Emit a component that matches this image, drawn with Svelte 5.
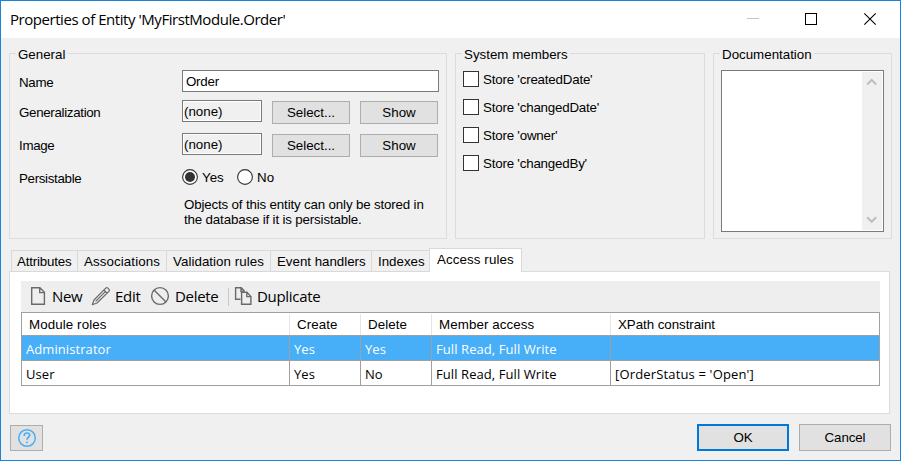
<script>
  const members = ["Store 'createdDate'", "Store 'changedDate'", "Store 'owner'", "Store 'changedBy'"];
  const tabs = [
    { label: 'Attributes', cls: 't1' },
    { label: 'Associations', cls: 't2' },
    { label: 'Validation rules', cls: 't3' },
    { label: 'Event handlers', cls: 't4' },
    { label: 'Indexes', cls: 't5' },
    { label: 'Access rules', cls: 'active' }
  ];
  const columns = ['Module roles', 'Create', 'Delete', 'Member access', 'XPath constraint'];
  const rows = [
    ['Administrator', 'Yes', 'Yes', 'Full Read, Full Write', ''],
    ['User', 'Yes', 'No', 'Full Read, Full Write', "[OrderStatus = 'Open']"]
  ];
  let persistable = $state('Yes');
  let selected = $state(0);
</script>

<div class="window">
  <header>
    <h1>Properties of Entity 'MyFirstModule.Order'</h1>
    <svg class="controls" width="130" height="14" viewBox="0 0 130 14">
      <path d="M0 6.5h12" stroke="#c4c4c4" />
      <rect x="58.5" y="1.5" width="11" height="11" fill="none" stroke="#000" />
      <path d="M117.3 1.3l11.4 11.4M128.7 1.3l-11.4 11.4" stroke="#000" stroke-width="1.1" />
    </svg>
  </header>

  <div class="groups">
    <fieldset class="general">
      <legend>General</legend>
      <div class="row first">
        <span class="label">Name</span>
        <div class="input wide">Order</div>
      </div>
      <div class="row">
        <span class="label">Generalization</span>
        <div class="input readonly">(none)</div>
        <button class="small">Select...</button>
        <button class="small">Show</button>
      </div>
      <div class="row">
        <span class="label">Image</span>
        <div class="input readonly">(none)</div>
        <button class="small">Select...</button>
        <button class="small">Show</button>
      </div>
      <div class="row last">
        <span class="label">Persistable</span>
        {#each ['Yes', 'No'] as option}
          <label class="radio {option}">
            <svg width="16" height="16" viewBox="0 0 16 16">
              <circle cx="8" cy="8" r="7.4" fill="#fff" stroke="#333" stroke-width="1.1" />
              {#if persistable === option}<circle cx="8" cy="8" r="5" fill="#333" />{/if}
            </svg>
            <span>{option}</span>
          </label>
        {/each}
      </div>
      <p>Objects of this entity can only be stored in<br />the database if it is persistable.</p>
    </fieldset>

    <fieldset class="system">
      <legend>System members</legend>
      <div class="checks">
        {#each members as member}
          <label><i></i><span>{member}</span></label>
        {/each}
      </div>
    </fieldset>

    <fieldset class="docs">
      <legend>Documentation</legend>
      <div class="textarea">
        <div class="scroll">
          <svg width="20" height="20" viewBox="0 0 20 20"><path d="M5.2 12.6L9.7 8.1l4.5 4.5" fill="none" stroke="#bfbfbf" stroke-width="2.1" /></svg>
          <svg width="20" height="20" viewBox="0 0 20 20"><path d="M5.2 7.2l4.5 4.5 4.5-4.5" fill="none" stroke="#bfbfbf" stroke-width="2.1" /></svg>
        </div>
      </div>
    </fieldset>
  </div>

  <nav>
    {#each tabs as tab}
      <div class="tab {tab.cls}"><span>{tab.label}</span></div>
    {/each}
  </nav>

  <main>
    <div class="toolbar">
      <svg class="ic-new" width="16" height="20" viewBox="0 0 16 20" fill="none" stroke="#6a6a6a" stroke-width="1.4">
        <path d="M1.7 1.7h8.2l4.5 4.6v12H1.7zM9.7 1.9v4.7h4.5" />
      </svg>
      <span class="b-new">New</span>
      <svg class="ic-edit" width="20" height="20" viewBox="0 0 20 20" fill="none" stroke="#6a6a6a" stroke-width="1.2" stroke-linejoin="round">
        <path d="M1.3 18.700l1.700-4.700L14.700 2.100q1.100-1 2.200 0l1 1q1.100 1.100 0 2.200L6 17zM12.900 4l3.100 3.100M4.600 15.400l9.700-9.700" />
      </svg>
      <span class="b-edit">Edit</span>
      <svg class="ic-del" width="20" height="20" viewBox="0 0 20 20" fill="none" stroke="#6a6a6a" stroke-width="1.4">
        <circle cx="10" cy="10" r="8.4" /><path d="M4 4l12 12" />
      </svg>
      <span class="b-del">Delete</span>
      <i class="sep"></i>
      <svg class="ic-dup" width="18" height="20" viewBox="0 0 18 20" fill="none" stroke="#6a6a6a" stroke-width="1.4">
        <path d="M6.5 13.3H1.6V1.7h5.6l3 3v1.1M7 1.9V5.5h2.5" />
        <path d="M7.6 6.3h5.3l4 4.2v7.8H7.6zM12.8 6.5v4.100h4" />
      </svg>
      <span class="b-dup">Duplicate</span>
    </div>
    <div class="table">
      <div class="tr head">
        {#each columns as column}<div class="cell"><span>{column}</span></div>{/each}
      </div>
      {#each rows as row, i}
        <div class="tr" class:selected={selected === i}>
          {#each row as value}<div class="cell"><span>{value}</span></div>{/each}
        </div>
      {/each}
    </div>
  </main>

  <footer>
    <button class="help" aria-label="Help">
      <svg width="20" height="20" viewBox="0 0 20 20" fill="none" stroke="#4aaef7">
        <circle cx="10" cy="10" r="8.3" stroke-width="1.5" />
        <path d="M7.3 8V7.3a2.700 2.300 0 0 1 5.400 0c0 1.700-2.700 1.800-2.700 4.500M10 13.500v1.700" stroke-width="1.700" />
      </svg>
    </button>
    <button class="big ok">OK</button>
    <button class="big">Cancel</button>
  </footer>
</div>

<style>
  :global(body) { margin: 0; }
  * { box-sizing: border-box; }
  .window {
    width: 901px; height: 461px; border: 1px solid #1883d7; background: #f0f0f0;
    font: 13.33px/16px 'Liberation Sans', Arial, sans-serif; color: #000; letter-spacing: -0.25px;
    display: flex; flex-direction: column; overflow: hidden; white-space: nowrap;
  }
  header { flex: none; height: 37px; background: #fff; display: flex; justify-content: space-between; padding: 0 23px 0 9px; }
  h1 { margin: 8px 0 0; font: 400 15px/20px 'Open Sans', 'Noto Sans', sans-serif; letter-spacing: -0.45px; }
  .controls { margin-top: 11px; }
  .groups { flex: none; display: flex; gap: 8px; padding: 6px 0 0 8px; }
  fieldset { margin: 0; min-width: 0; height: 195px; border: 1px solid #dcdcdc; padding: 0; }
  legend { margin-left: 6px; padding: 3px 2px 0; line-height: 16px; letter-spacing: 0; }
  .general { width: 438px; }
  .system { width: 250px; }
  .docs { width: 179px; }
  .row { display: flex; align-items: flex-start; height: 33px; padding-left: 9px; }
  .row.first { height: 30px; margin-top: 7px; }
  .row.last { height: 31px; }
  .label { width: 163px; padding-top: 5px; letter-spacing: -0.32px; }
  .input { height: 22px; border: 1px solid #7a7a7a; padding: 3px 0 0 3px; background: #fff; }
  .wide { width: 257px; }
  .readonly { width: 80px; background: #f0f0f0; box-shadow: inset 0 0 0 1px #fff; padding-left: 1px; letter-spacing: 0; }
  button { font: inherit; color: inherit; letter-spacing: inherit; border: 1px solid #adadad; background: #e1e1e1; border-radius: 0; padding: 0; margin: 0; }
  .small { width: 78px; height: 23px; margin: 1px 0 0 10px; line-height: 21px; letter-spacing: 0; }
  .radio { display: flex; margin-top: 3px; letter-spacing: 0; }
  .radio span { margin: 1px 0 0 4px; }
  .Yes { width: 55px; }
  p { margin: 0 0 0 174px; line-height: 15px; letter-spacing: -0.16px; }
  .checks { margin: 8px 0 0 7px; display: flex; flex-direction: column; gap: 12px; letter-spacing: -0.2px; }
  .checks label { display: flex; height: 16px; }
  .checks span { margin-top: 1px; }
  .checks i { width: 16px; height: 16px; border: 1px solid #333; background: #fff; margin-right: 4px; }
  .textarea { width: 163px; height: 162px; margin: 7px 0 0 7px; border: 1px solid #7a7a7a; background: #fff; display: flex; justify-content: flex-end; padding: 1px; }
  .scroll { width: 20px; background: #f0f0f0; display: flex; flex-direction: column; justify-content: space-between; }
  nav { flex: none; display: flex; align-items: flex-end; height: 33px; padding-left: 10px; letter-spacing: 0.1px; margin-bottom: -1px; position: relative; }
  .tab { height: 22px; border: 1px solid #d9d9d9; border-right: 0; padding: 3px 0 0 6px; }
  .t1 { width: 66px; padding-left: 5px; letter-spacing: -0.18px; }
  .t2 { width: 89px; }
  .t3 { width: 104px; letter-spacing: 0.05px; }
  .t4 { width: 101px; letter-spacing: -0.02px; }
  .t5 { width: 58px; letter-spacing: 0; }
  .active { width: 93px; height: 24px; background: #fff; border: 1px solid #d9d9d9; border-bottom: 0; padding-left: 7px; }
  main { flex: none; width: 881px; height: 143px; margin-left: 8px; border: 1px solid #dcdcdc; background: #fff; padding: 9px 9px 0 11px; }
  .toolbar { height: 31px; background: #eee; display: flex; align-items: flex-start; font: 15px/20px 'Open Sans', 'Noto Sans', sans-serif; letter-spacing: -0.3px; }
  .toolbar svg { flex: none; margin-top: 5px; }
  .toolbar span { margin-top: 5px; flex: none; }
  .ic-new { margin-left: 9px; }
  .b-new { width: 39px; margin-left: 6px; }
  .b-edit { width: 35px; margin-left: 4px; }
  .b-del { width: 53px; margin-left: 5px; }
  .sep { width: 1px; height: 18px; margin: 7px 5px 0 0; background: #c6c6c6; }
  .b-dup { margin-left: 5px; }
  .table { border: 1px solid #a0a0a0; border-bottom: 0; width: 859px; }
  .tr { display: grid; grid-template-columns: 268px 71px 71px 179px 268px; height: 25px; border-bottom: 1px solid #a0a0a0; font: 13px/16px 'Open Sans', 'Noto Sans', sans-serif; letter-spacing: 0.08px; }
  .tr .cell:last-child { letter-spacing: 0.16px; }
  .cell { border-right: 1px solid #a0a0a0; padding: 5px 0 0 4px; }
  .cell:last-child { border-right: 0; }
  .head { height: 23px; font: 13.33px/16px 'Liberation Sans', Arial, sans-serif; letter-spacing: 0.1px; }
  .head .cell { border-color: #e5e5e5; margin-top: 1px; padding: 3px 0 0 7px; }
  .head .cell:last-child { letter-spacing: -0.05px; }
  .selected { background: #47aef8; color: #fff; }
  footer { display: flex; padding: 10px 0 0 9px; }
  .help { width: 33px; height: 26px; margin: 1px 654px 0 0; display: flex; justify-content: center; align-items: center; }
  .big { width: 92px; height: 27px; letter-spacing: -0.1px; }
  .ok { border: 2px solid #0078d7; margin-right: 10px; }
</style>
